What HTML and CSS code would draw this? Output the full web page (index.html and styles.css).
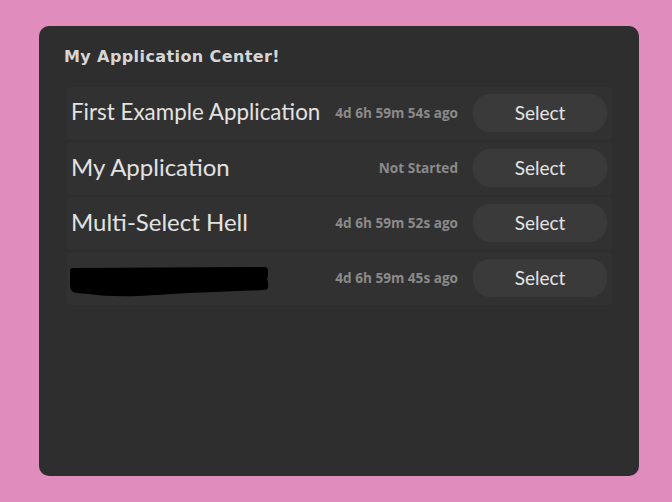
FILE: index.html
```html
<!DOCTYPE html>
<html>
<head>
<meta charset="utf-8">
<link rel="stylesheet" href="styles.css">
</head>
<body>
<div class="panel">
  <div class="title">My Application Center!</div>
  <div class="list">
    <div class="row">
      <div class="name name-fit">First Example Application</div>
      <div class="time">4d 6h 59m 54s ago</div>
      <button class="select">Select</button>
    </div>
    <div class="row">
      <div class="name">My Application</div>
      <div class="time">Not Started</div>
      <button class="select">Select</button>
    </div>
    <div class="row">
      <div class="name">Multi-Select Hell</div>
      <div class="time">4d 6h 59m 52s ago</div>
      <button class="select">Select</button>
    </div>
    <div class="row">
      <div class="name redacted-wrap">
        <svg class="redacted" width="200" height="32" viewBox="0 0 200 32">
          <path d="M3 2 L196 1 Q199 1 199 5 L199 11 Q197 13 199 15 L199 21 Q199 24 195 24 L120 27 L70 30 Q40 31 20 28 L8 27 Q1 26 1 20 L1 6 Q1 2 3 2 Z" fill="#000"/>
        </svg>
      </div>
      <div class="time">4d 6h 59m 45s ago</div>
      <button class="select">Select</button>
    </div>
  </div>
</div>
</body>
</html>
```
FILE: styles.css
```css
html, body {
  margin: 0;
  padding: 0;
}
body {
  background: #e08cbc;
  width: 672px;
  height: 502px;
  padding: 26px 33px 26px 39px;
  box-sizing: border-box;
}
.panel {
  width: 600px;
  height: 450px;
  background: #2e2e2e;
  border-radius: 10px;
  box-sizing: border-box;
  padding: 19px 27px 0 28px;
}
.title {
  font-family: "DejaVu Sans", sans-serif;
  font-weight: 700;
  font-size: 16px;
  letter-spacing: 0.4px;
  color: #d6d6d6;
  margin-left: -3px;
  line-height: 24px;
  height: 24px;
}
.list {
  margin-top: 18px;
  display: flex;
  flex-direction: column;
  gap: 2px;
}
.row {
  height: 53px;
  background: #313131;
  border-radius: 4px;
  display: flex;
  align-items: center;
  padding: 0 5px 0 4px;
}
.name {
  flex: 1;
  min-width: 0;
  font-family: "Lato", sans-serif;
  font-size: 24px;
  line-height: 30px;
  margin-bottom: 3px;
  color: #e2e2e2;
  white-space: nowrap;
}
.name-fit {
  font-size: 22.4px;
}
.redacted-wrap {
  margin-bottom: 0;
}
.redacted {
  display: block;
  margin-top: 6px;
  margin-left: -2px;
}
.time {
  font-family: "Open Sans", sans-serif;
  font-weight: 700;
  font-size: 13.6px;
  color: #8a8a8a;
  margin-right: 15px;
  margin-bottom: 2px;
  white-space: nowrap;
}
.select {
  width: 134px;
  height: 38px;
  border: none;
  border-radius: 17px;
  background: #3a3a3a;
  color: #e4e4e4;
  font-family: "Lato", sans-serif;
  font-size: 19px;
  padding: 0;
  margin-top: -2px;
}
```
